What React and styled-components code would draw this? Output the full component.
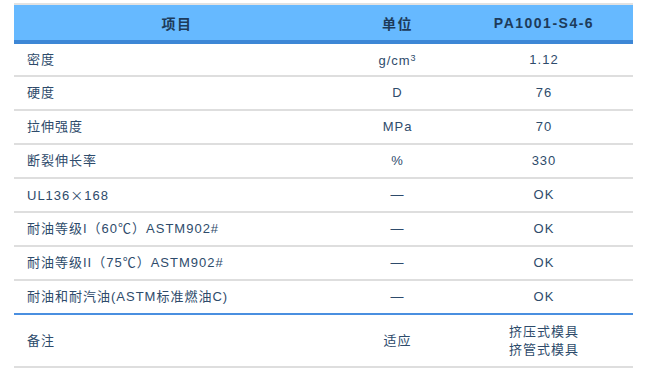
import React from "react";
import styled, { createGlobalStyle } from "styled-components";

const GlobalStyle = createGlobalStyle`
  body {
    margin: 0;
    background: #fff;
    font-family: "Liberation Sans", Arial, "Noto Sans CJK SC", sans-serif;
  }
`;

const Wrap = styled.div`
  padding: 3px 12px 0 14px;
`;

const Table = styled.table`
  width: 619px;
  border-collapse: collapse;
  table-layout: fixed;
  border-top: 2px solid #e2e2e2;
`;

const Th = styled.th`
  height: 35px;
  padding: 0;
  background: #66b9ff;
  border-bottom: 4px solid #3d87d6;
  color: #1d3b5a;
  font-size: 14px;
  font-weight: bold;
  letter-spacing: 1.5px;
  text-align: center;
`;

const Row = styled.tr`
  height: 34px;
  border-bottom: ${(p) => (p.$last ? "2px solid #4a8fe0" : "2px solid #dedede")};
`;

const NoteRow = styled.tr`
  height: 53px;
  border-bottom: 2px solid #dedede;
`;

const Td = styled.td`
  padding: 0 0 0 ${(p) => (p.$left ? "13px" : "0")};
  color: #2e4b6b;
  font-size: 13px;
  letter-spacing: 1px;
  line-height: 18px;
  text-align: ${(p) => (p.$left ? "left" : "center")};
  vertical-align: middle;
`;

const Sup = styled.span`
  font-size: 9px;
  vertical-align: 4px;
`;

const Wide = styled.span`
  font-family: "Noto Sans CJK SC", sans-serif;
`;

const rows = [
  { name: "密度", unit: <>g/cm<Sup>3</Sup></>, value: "1.12" },
  { name: "硬度", unit: "D", value: "76" },
  { name: "拉伸强度", unit: "MPa", value: "70" },
  { name: "断裂伸长率", unit: "%", value: "330" },
  { name: <>UL136<Wide>×</Wide>168</>, unit: "—", value: "OK" },
  { name: "耐油等级I（60℃）ASTM902#", unit: "—", value: "OK" },
  { name: "耐油等级II（75℃）ASTM902#", unit: "—", value: "OK" },
  { name: "耐油和耐汽油(ASTM标准燃油C)", unit: "—", value: "OK" },
];

const App = () => {
  return (
    <>
      <GlobalStyle />
      <Wrap>
        <Table>
          <colgroup>
            <col style={{ width: 326 }} />
            <col style={{ width: 115 }} />
            <col style={{ width: 178 }} />
          </colgroup>
          <thead>
            <tr>
              <Th>项目</Th>
              <Th>单位</Th>
              <Th>PA1001-S4-6</Th>
            </tr>
          </thead>
          <tbody>
            {rows.map((r, i) => (
              <Row key={i} $last={i === rows.length - 1}>
                <Td $left>{r.name}</Td>
                <Td>{r.unit}</Td>
                <Td>{r.value}</Td>
              </Row>
            ))}
            <NoteRow>
              <Td $left>备注</Td>
              <Td>适应</Td>
              <Td>
                挤压式模具
                <br />
                挤管式模具
              </Td>
            </NoteRow>
          </tbody>
        </Table>
      </Wrap>
    </>
  );
};

export default App;
